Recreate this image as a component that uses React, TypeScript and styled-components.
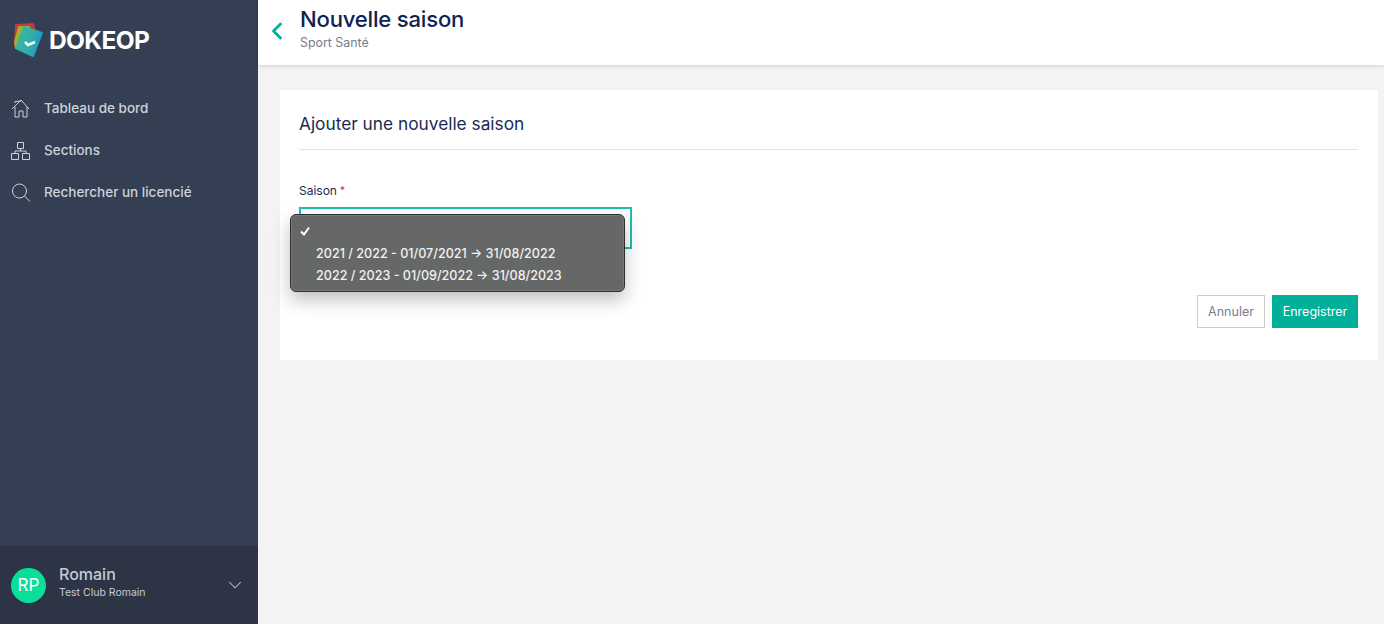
import React from 'react'
import styled, { createGlobalStyle } from 'styled-components'
import { ChevronDown, ChevronLeft } from 'lucide-react'

const GlobalStyle = createGlobalStyle`
  html, body { margin: 0; padding: 0; height: 100%; }
  body { font-family: Inter, "Noto Sans", sans-serif; background: #f3f3f3; }
`

const Page = styled.div`
  display: flex;
  width: 1384px;
  height: 624px;
  overflow: hidden;
`

const Sidebar = styled.aside`
  width: 258px;
  flex: none;
  display: flex;
  flex-direction: column;
  background: #343f53;
`

const Brand = styled.div`
  display: flex;
  align-items: center;
  gap: 1px;
  height: 56px;
  padding: 12px 0 0 13px;
`

const BrandName = styled.span`
  font-size: 24.5px;
  font-weight: 700;
  letter-spacing: -0.6px;
  color: #fff;
`

const Nav = styled.nav`
  display: flex;
  flex-direction: column;
  margin-top: 19px;
  flex: 1;
`

const NavItem = styled.a`
  display: flex;
  align-items: center;
  height: 42px;
  padding-left: 10px;
  gap: 13px;
  font-size: 13.5px;
  font-weight: 500;
  color: #cdd2da;
`

const NavIcon = styled.svg`
  width: 21px;
  height: 21px;
  flex: none;
  fill: none;
  stroke: #cdd2da;
  stroke-width: 1;
`

const UserBar = styled.div`
  height: 78px;
  display: flex;
  align-items: center;
  padding: 0 12px 0 11px;
  background: #2c3446;
`

const Avatar = styled.div`
  width: 35px;
  height: 35px;
  border-radius: 50%;
  background: #0adf9a;
  color: #fff;
  font-size: 17px;
  display: flex;
  align-items: center;
  justify-content: center;
`

const UserText = styled.div`
  margin: 0 0 8px 13px;
  flex: 1;
  display: flex;
  flex-direction: column;
  gap: 2px;
`

const UserName = styled.div`
  font-size: 16px;
  font-weight: 500;
  color: #c6cbd3;
`

const UserClub = styled.div`
  font-size: 10.5px;
  color: #c6cbd3;
`

const Main = styled.main`
  flex: 1;
  display: flex;
  flex-direction: column;
  min-width: 0;
`

const Header = styled.header`
  height: 65px;
  flex: none;
  display: flex;
  align-items: flex-start;
  background: #fff;
  box-shadow: 0 1px 4px rgba(0, 0, 0, 0.14);
  position: relative;
`

const BackIcon = styled.div`
  color: #00b39b;
  display: flex;
  margin: 17px 0 0 5px;
`

const Titles = styled.div`
  margin: 6px 0 0 9px;
`

const Title = styled.h1`
  margin: 0;
  font-size: 22.1px;
  line-height: 27px;
  font-weight: 500;
  letter-spacing: -0.2px;
  color: #0f2350;
`

const Subtitle = styled.div`
  margin-top: 2px;
  font-size: 12.4px;
  line-height: 15px;
  color: #767c88;
`

const Card = styled.section`
  margin: 25px 6px 0 22px;
  height: 270px;
  padding: 0 20px 0 19px;
  background: #fff;
  display: flex;
  flex-direction: column;
`

const CardTitle = styled.h2`
  margin: 0;
  height: 59px;
  line-height: 68px;
  border-bottom: 1px solid #e3e3e3;
  font-size: 17.3px;
  font-weight: 400;
  color: #1a2a55;
`

const Label = styled.label`
  margin-top: 33px;
  font-size: 12px;
  line-height: 15px;
  color: #1a2a55;
`

const Required = styled.span`
  margin-left: 3px;
  font-size: 10px;
  vertical-align: 1px;
  color: #e8153c;
`

const SelectWrap = styled.div`
  position: relative;
  margin-top: 9px;
  width: 333px;
  height: 42px;
`

const SelectBox = styled.div`
  box-sizing: border-box;
  width: 100%;
  height: 100%;
  border: 2px solid #1fbfae;
`

const Menu = styled.div`
  position: absolute;
  left: -9px;
  top: 7px;
  box-sizing: border-box;
  width: 335px;
  height: 78px;
  padding: 5px 0 0 9px;
  border: 1px solid #2e2e2e;
  border-radius: 6px;
  background: #666867;
  box-shadow: 0 8px 18px rgba(0, 0, 0, 0.25), inset 0 0 0 1px rgba(255, 255, 255, 0.12);
`

const MenuRow = styled.div`
  display: flex;
  align-items: center;
  height: 22px;
  font-size: 12.6px;
  font-weight: 500;
  color: #f1f1f1;
`

const Check = styled.svg`
  width: 16px;
  height: 22px;
  flex: none;
  fill: none;
  stroke: #fff;
  stroke-width: 2;
`

const Actions = styled.div`
  display: flex;
  justify-content: flex-end;
  gap: 7px;
  margin-top: 46px;
`

const Btn = styled.button<{ $primary?: boolean }>`
  height: 33px;
  box-sizing: border-box;
  padding: 0;
  width: ${p => (p.$primary ? '86px' : '68px')};
  border: 1px solid ${p => (p.$primary ? '#00b09a' : '#cccccc')};
  background: ${p => (p.$primary ? '#00b09a' : '#fff')};
  color: ${p => (p.$primary ? '#fff' : '#7b8088')};
  font-family: inherit;
  font-size: 12.5px;
`

const Logo = () => (
  <svg width="35" height="36" viewBox="0 0 35 36">
    <defs>
      <linearGradient id="logoCard" x1="0" y1="0" x2="1" y2="0.3">
        <stop offset="0" stopColor="#3fb59c" />
        <stop offset="0.65" stopColor="#2fb0a8" />
        <stop offset="1" stopColor="#1c9ac8" />
      </linearGradient>
    </defs>
    <polygon points="3,3 20,2 22,10 2,24" fill="#c8383f" stroke="#c8383f" strokeLinejoin="round" strokeWidth="2" />
    <polygon points="6,5 16,5 3,26 2,20" fill="#9fb12c" stroke="#9fb12c" strokeLinejoin="round" strokeWidth="2" />
    <polygon points="11,5 29,11 20,34 3,26" fill="url(#logoCard)" stroke="url(#logoCard)" strokeLinejoin="round" strokeWidth="2" />
    <path d="M12 20l3 3 7-3" fill="none" stroke="#fff" strokeWidth="2.5" />
  </svg>
)

const App = () => (
  <Page>
    <GlobalStyle />
    <Sidebar>
      <Brand>
        <Logo />
        <BrandName>DOKEOP</BrandName>
      </Brand>
      <Nav>
        <NavItem>
          <NavIcon viewBox="0 0 21 21">
            <path d="M2 11L11 2l8 9M5 9v10h4v-6h4v6h4V9M5 5V3.500M5 3.500l6-.5" />
          </NavIcon>
          Tableau de bord
        </NavItem>
        <NavItem>
          <NavIcon viewBox="0 0 21 21">
            <path d="M7.500 2.500h6v6h-6zM1.500 13.500h7v6h-7zM12.500 13.500h7v6h-7zM10.500 8.500v2.500M5 13.500V11h11v2.500" />
          </NavIcon>
          Sections
        </NavItem>
        <NavItem>
          <NavIcon viewBox="0 0 21 21">
            <circle cx="9.500" cy="9" r="7" />
            <path d="M14.500 14l5.500 5.500" />
          </NavIcon>
          Rechercher un licencié
        </NavItem>
      </Nav>
      <UserBar>
        <Avatar>RP</Avatar>
        <UserText>
          <UserName>Romain</UserName>
          <UserClub>Test Club Romain</UserClub>
        </UserText>
        <ChevronDown size={22} color="#c6cbd3" strokeWidth={1.1} />
      </UserBar>
    </Sidebar>
    <Main>
      <Header>
        <BackIcon>
          <ChevronLeft size={28} strokeWidth={2.5} />
        </BackIcon>
        <Titles>
          <Title>Nouvelle saison</Title>
          <Subtitle>Sport Santé</Subtitle>
        </Titles>
      </Header>
      <Card>
        <CardTitle>Ajouter une nouvelle saison</CardTitle>
        <Label>
          Saison<Required>*</Required>
        </Label>
        <SelectWrap>
          <SelectBox />
          <Menu>
            <MenuRow>
              <Check viewBox="0 0 16 22">
                <path d="M1 11.500l3 3 5-7" />
              </Check>
            </MenuRow>
            <MenuRow>
              <Check as="span" />
              2021 / 2022 - 01/07/2021 → 31/08/2022
            </MenuRow>
            <MenuRow>
              <Check as="span" />
              2022 / 2023 - 01/09/2022 → 31/08/2023
            </MenuRow>
          </Menu>
        </SelectWrap>
        <Actions>
          <Btn>Annuler</Btn>
          <Btn $primary>Enregistrer</Btn>
        </Actions>
      </Card>
    </Main>
  </Page>
)

export default App
